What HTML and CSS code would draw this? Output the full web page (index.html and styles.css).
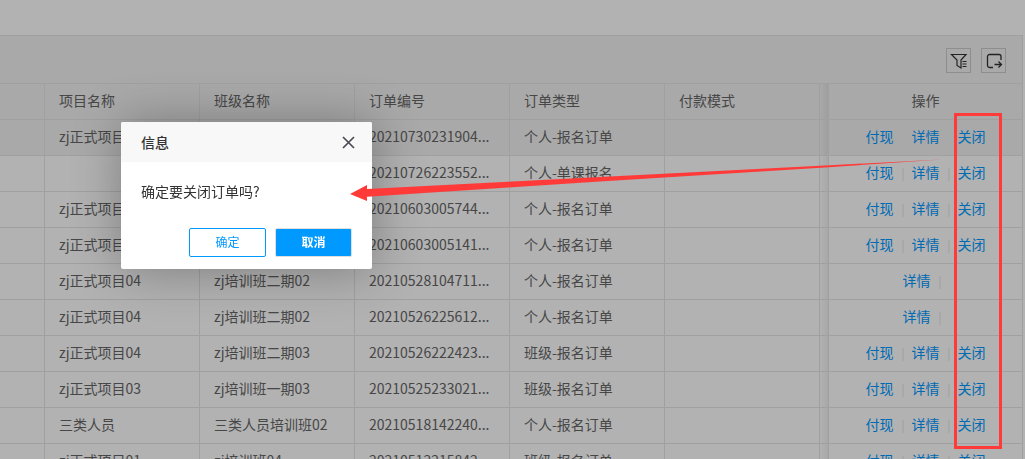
FILE: index.html
```html
<!DOCTYPE html>
<html lang="zh-CN">
<head>
<meta charset="UTF-8">
<meta name="viewport" content="width=device-width, initial-scale=1.0">
<title>订单管理</title>
<link rel="stylesheet" href="styles.css">
</head>
<body>
    <main class="order-list">
        <div class="toolbar">
            <button type="button" class="tool-btn" aria-label="筛选列">
                <svg width="18" height="18" viewBox="0 0 18 18" fill="none" stroke="#333" stroke-width="1.2">
                    <path d="M1.500 2.500h14.500l-5 5.500v8l-4-2.500V8z"/>
                    <path d="M12.500 9.500h4M12.500 12h4M12.500 14.500h4"/>
                </svg>
            </button>
            <button type="button" class="tool-btn" aria-label="导出">
                <svg width="18" height="18" viewBox="0 0 18 18" fill="none" stroke="#333" stroke-width="1.3">
                    <path d="M8 15.500H4.500a2 2 0 0 1-2-2v-9a2 2 0 0 1 2-2h9.500a2 2 0 0 1 2 2V8"/>
                    <path d="M9.500 12.500h7M13.500 9.500l3 3-3 3"/>
                </svg>
            </button>
        </div>
        <table class="orders">
            <colgroup>
                <col class="col-check">
                <col class="col-data">
                <col class="col-data">
                <col class="col-data">
                <col class="col-data">
                <col class="col-data">
                <col class="col-gap">
                <col>
            </colgroup>
            <thead>
                <tr><th></th><th>项目名称</th><th>班级名称</th><th>订单编号</th><th>订单类型</th><th>付款模式</th><th class="gap"></th><th class="ops">操作</th></tr>
            </thead>
            <tbody>
                <tr class="hover"><td></td><td>zj正式项目04</td><td>zj培训班二期02</td><td>20210730231904...</td><td>个人-报名订单</td><td></td><td class="gap"></td><td class="ops"><a href="#">付现</a><i></i><a href="#">详情</a><i></i><a href="#">关闭</a></td></tr>
                <tr><td></td><td></td><td></td><td>20210726223552...</td><td>个人-单课报名</td><td></td><td class="gap"></td><td class="ops"><a href="#">付现</a><i></i><a href="#">详情</a><i></i><a href="#">关闭</a></td></tr>
                <tr><td></td><td>zj正式项目04</td><td>zj培训班二期02</td><td>20210603005744...</td><td>个人-报名订单</td><td></td><td class="gap"></td><td class="ops"><a href="#">付现</a><i></i><a href="#">详情</a><i></i><a href="#">关闭</a></td></tr>
                <tr><td></td><td>zj正式项目04</td><td>zj培训班二期02</td><td>20210603005141...</td><td>个人-报名订单</td><td></td><td class="gap"></td><td class="ops"><a href="#">付现</a><i></i><a href="#">详情</a><i></i><a href="#">关闭</a></td></tr>
                <tr><td></td><td>zj正式项目04</td><td>zj培训班二期02</td><td>20210528104711...</td><td>个人-报名订单</td><td></td><td class="gap"></td><td class="ops"><a href="#">详情</a><i></i></td></tr>
                <tr><td></td><td>zj正式项目04</td><td>zj培训班二期02</td><td>20210526225612...</td><td>个人-报名订单</td><td></td><td class="gap"></td><td class="ops"><a href="#">详情</a><i></i></td></tr>
                <tr><td></td><td>zj正式项目04</td><td>zj培训班二期03</td><td>20210526222423...</td><td>班级-报名订单</td><td></td><td class="gap"></td><td class="ops"><a href="#">付现</a><i></i><a href="#">详情</a><i></i><a href="#">关闭</a></td></tr>
                <tr><td></td><td>zj正式项目03</td><td>zj培训班一期03</td><td>20210525233021...</td><td>班级-报名订单</td><td></td><td class="gap"></td><td class="ops"><a href="#">付现</a><i></i><a href="#">详情</a><i></i><a href="#">关闭</a></td></tr>
                <tr><td></td><td>三类人员</td><td>三类人员培训班02</td><td>20210518142240...</td><td>个人-报名订单</td><td></td><td class="gap"></td><td class="ops"><a href="#">付现</a><i></i><a href="#">详情</a><i></i><a href="#">关闭</a></td></tr>
                <tr><td></td><td>zj正式项目01</td><td>zj培训班04</td><td>20210512215842...</td><td>班级-报名订单</td><td></td><td class="gap"></td><td class="ops"><a href="#">付现</a><i></i><a href="#">详情</a><i></i><a href="#">关闭</a></td></tr>
            </tbody>
        </table>
    </main>

    <div class="shade"></div>

    <div class="dialog" role="dialog" aria-labelledby="dialogTitle">
        <div class="dialog-title">
            <span id="dialogTitle">信息</span>
            <button type="button" class="dialog-close" aria-label="关闭">
                <svg width="13" height="13" viewBox="0 0 13 13" stroke="#4c4a54" stroke-width="1.7">
                    <path d="M1 1l11 11M12 1L1 12"/>
                </svg>
            </button>
        </div>
        <div class="dialog-content">确定要关闭订单吗?</div>
        <div class="dialog-btns">
            <button type="button" class="btn">确定</button>
            <button type="button" class="btn btn-primary">取消</button>
        </div>
    </div>

    <!-- annotations -->
    <div class="mark-box"></div>
    <svg class="mark-arrow" width="592" height="44" viewBox="0 0 592 44">
        <path d="M0 36L17 27V31L250 19L475 7.500L592 1.500L475 9.500L250 23.500L17 38.700V43z" fill="#ff3a38"/>
    </svg>
</body>
</html>
```
FILE: styles.css
```css
* {
    box-sizing: border-box;
}
body {
    margin: 0;
    height: 100vh;
    overflow: hidden;
    position: relative;
    background-color: #fff;
    color: #666;
    font-family: "Noto Sans CJK SC", sans-serif;
    font-size: 14px;
}
button {
    font-family: inherit;
    cursor: pointer;
}
a {
    color: #0099ff;
    text-decoration: none;
}

.order-list {
    margin: 35px 2px 0 0;
    border-top: 1px solid #e6e6e6;
    border-right: 1px solid #e6e6e6;
}
.toolbar {
    display: flex;
    justify-content: flex-end;
    gap: 10px;
    height: 48px;
    padding: 12px 16px 0 0;
    background-color: #f2f2f2;
    border-bottom: 1px solid #e6e6e6;
}
.tool-btn {
    display: flex;
    align-items: center;
    justify-content: center;
    width: 25px;
    height: 25px;
    padding: 0;
    background: none;
    border: 1px solid #ccc;
}

.orders {
    width: 100%;
    table-layout: fixed;
    border-collapse: separate;
    border-spacing: 0;
}
.col-check {
    width: 45px;
}
.col-data {
    width: 155px;
}
.col-gap {
    width: 9px;
}
.orders th,
.orders td {
    height: 36px;
    padding: 0 0 2px 14px;
    line-height: 33px;
    font-weight: normal;
    text-align: left;
    white-space: nowrap;
    overflow: hidden;
    border-right: 1px solid #e6e6e6;
    border-bottom: 1px solid #e6e6e6;
}
.orders thead,
.orders .hover {
    background-color: #f2f2f2;
}
.orders .gap {
    padding: 0;
    background-image: linear-gradient(to right, transparent, rgba(0, 0, 0, 0.06));
}
.orders .ops {
    padding-left: 0;
    text-align: center;
    border-right: none;
}
.ops i {
    display: inline-block;
    width: 2px;
    height: 13px;
    margin: 0 8px;
    vertical-align: middle;
    background-color: #f2f2f2;
}

.shade {
    position: fixed;
    inset: 0;
    background-color: rgba(0, 0, 0, 0.3);
}

.dialog {
    position: absolute;
    top: 122px;
    left: 121px;
    width: 251px;
    background-color: #fff;
    border-radius: 2px;
    box-shadow: 1px 1px 50px rgba(0, 0, 0, 0.3);
    color: #333;
}
.dialog-title {
    display: flex;
    align-items: center;
    justify-content: space-between;
    height: 40px;
    padding: 0 17px 0 20px;
    background-color: #f8f8f8;
    border-radius: 2px 2px 0 0;
    font-weight: 500;
}
.dialog-close {
    display: flex;
    padding: 0;
    background: none;
    border: none;
}
.dialog-content {
    padding: 19px 20px 21px;
    line-height: 20px;
}
.dialog-btns {
    display: flex;
    justify-content: flex-end;
    gap: 9px;
    padding: 6px 20px 12px;
}
.btn {
    width: 77px;
    height: 29px;
    padding: 0 0 2px;
    background-color: #fff;
    border: 1px solid #0099ff;
    border-radius: 2px;
    color: #0099ff;
    font-size: 12px;
}
.btn-primary {
    background-color: #0099ff;
    border-color: #dedede;
    color: #fff;
    font-weight: 700;
}

.mark-box {
    position: absolute;
    top: 113px;
    left: 954px;
    width: 48px;
    height: 336px;
    border: 3px solid #ff3a38;
}
.mark-arrow {
    position: absolute;
    top: 158px;
    left: 350px;
}
```
